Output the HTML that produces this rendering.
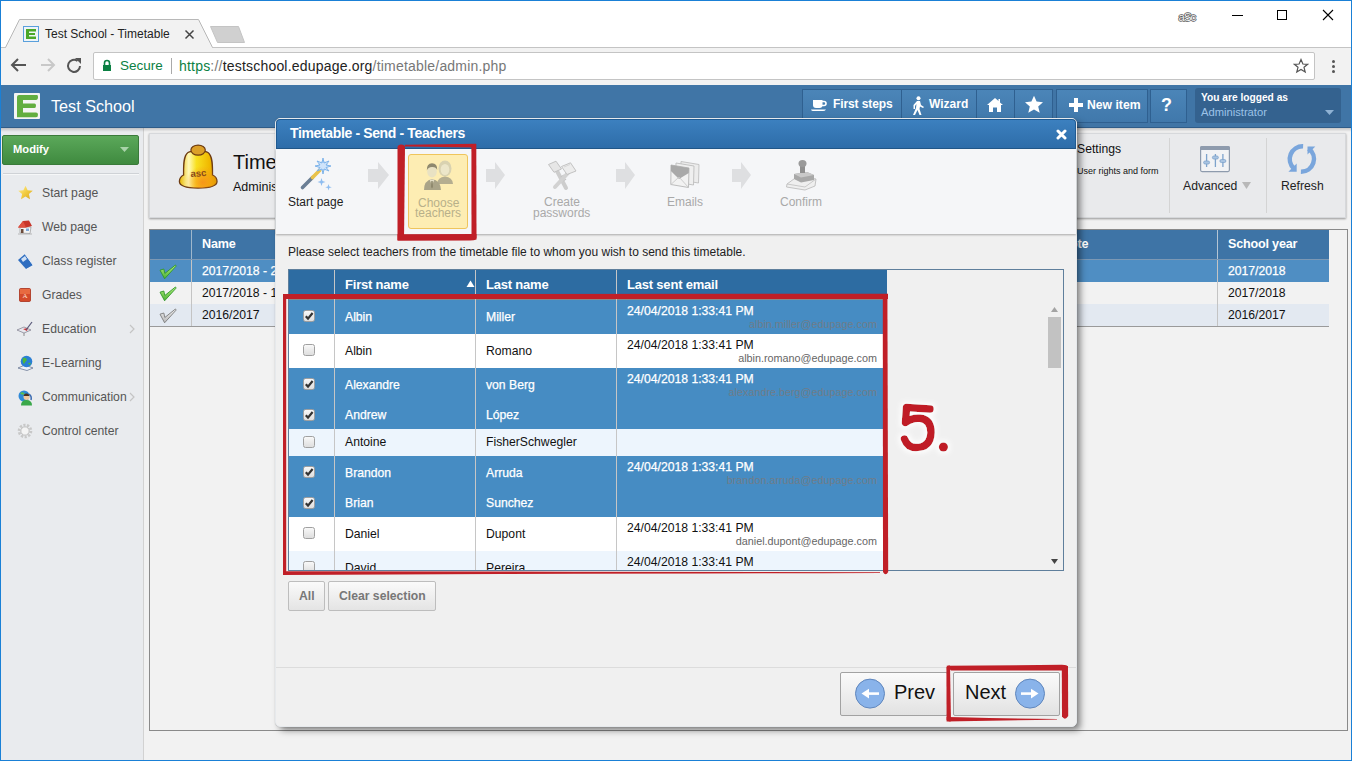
<!DOCTYPE html>
<html><head><meta charset="utf-8">
<style>
*{margin:0;padding:0;box-sizing:border-box}
html,body{width:1352px;height:761px;overflow:hidden;background:#fff;font-family:"Liberation Sans",sans-serif;font-size:13px;color:#222}
.a{position:absolute}
.t{position:absolute;white-space:nowrap;line-height:1}
</style></head><body>
<!-- window frame -->
<div class="a" style="left:0;top:0;width:1352px;height:761px;border:1px solid #1a80d6;z-index:100;pointer-events:none"></div>
<!-- title bar -->
<div class="a" style="left:1px;top:1px;width:1350px;height:46px;background:#fff"></div>
<svg class="a" style="left:0;top:0" width="260" height="48">
  <path d="M5.5,47.5 L19.5,19.5 L198.5,19.5 L212.5,47.5" fill="#f2f2f2" stroke="#b8b8b8" stroke-width="1"/>
  <path d="M210.5,26.5 L238.5,26.5 L244.5,42.5 L217.5,42.5 Z" fill="#d0d0d0" stroke="#c4c4c4" stroke-width="1" stroke-linejoin="round"/>
</svg>
<div class="a" style="left:1px;top:47px;width:1350px;height:1px;background:#c4c4c4"></div>
<div class="a" style="left:6px;top:47px;width:206px;height:1px;background:#f2f2f2"></div>
<!-- favicon -->
<svg class="a" style="left:23px;top:26px" width="16" height="16"><rect x="0.5" y="0.5" width="15" height="15" fill="#eef4f8" stroke="#5aa0dc"/>
<path d="M3,3 H13 V5.5 H6 V7 H12 V9 H6 V10.5 H13 V13 H3 Z" fill="#4aa82a"/></svg>
<div class="t" style="left:45px;top:28px;font-size:12px;color:#222">Test School - Timetable</div>
<svg class="a" style="left:184px;top:29px" width="12" height="12"><path d="M1.5,1.5 L9.5,9.5 M9.5,1.5 L1.5,9.5" stroke="#444" stroke-width="1.5"/></svg>
<!-- window controls -->
<svg class="a" style="left:1176px;top:8px" width="24" height="16"><text x="2.5" y="13" font-family="Liberation Sans" font-size="11.2" letter-spacing="-0.8" fill="#f6f6f6" stroke="#5a5a5a" stroke-width="1.5" paint-order="stroke" stroke-linejoin="round">aSc</text></svg>
<div class="a" style="left:1232px;top:15px;width:11px;height:1px;background:#000"></div>
<div class="a" style="left:1277px;top:10px;width:10px;height:10px;border:1px solid #000"></div>
<svg class="a" style="left:1322px;top:9px" width="13" height="13"><path d="M1,1 L11,11 M11,1 L1,11" stroke="#000" stroke-width="1.1"/></svg>
<!-- toolbar -->
<div class="a" style="left:1px;top:48px;width:1350px;height:37px;background:#f2f2f2"></div>
<svg class="a" style="left:10px;top:57px" width="80" height="18">
 <path d="M16,8 L2,8 M8,2 L2,8 L8,14" fill="none" stroke="#555" stroke-width="2"/>
 <path d="M31,8 L44,8 M38,2 L44,8 L38,14" fill="none" stroke="#c8c8c8" stroke-width="2"/>
</svg>
<svg class="a" style="left:66px;top:57px" width="18" height="18"><path d="M14,9 A6,6 0 1 1 11.5,4" fill="none" stroke="#555" stroke-width="2"/><path d="M9,1 L15,1 L15,7 Z" fill="#555"/></svg>
<div class="a" style="left:93px;top:52px;width:1222px;height:28px;background:#fff;border:1px solid #c4c4c4;border-radius:2px"></div>
<svg class="a" style="left:102px;top:59px" width="10" height="13"><path d="M2.5,6 V4 A2.5,2.5 0 0 1 7.5,4 V6" fill="none" stroke="#0b8043" stroke-width="1.6"/><rect x="1" y="6" width="8" height="6" fill="#0b8043"/></svg>
<div class="t" style="left:120px;top:59px;font-size:13.5px;color:#0b8043">Secure</div>
<div class="a" style="left:171px;top:58px;width:1px;height:16px;background:#aaa"></div>
<div class="t" style="left:179px;top:59px;font-size:14px;letter-spacing:0.2px;color:#222"><span style="color:#0b8043">https</span><span style="color:#777">://</span>testschool.edupage.org<span style="color:#777">/timetable/admin.php</span></div>
<svg class="a" style="left:1293px;top:58px" width="16" height="16"><path d="M8,1.5 L9.9,6 L14.6,6.3 L11,9.3 L12.2,14 L8,11.4 L3.8,14 L5,9.3 L1.4,6.3 L6.1,6 Z" fill="none" stroke="#555" stroke-width="1.2"/></svg>
<div class="a" style="left:1332px;top:60px;width:3px;height:3px;background:#555;border-radius:50%"></div>
<div class="a" style="left:1332px;top:65px;width:3px;height:3px;background:#555;border-radius:50%"></div>
<div class="a" style="left:1332px;top:70px;width:3px;height:3px;background:#555;border-radius:50%"></div>

<!-- header -->
<div class="a" style="left:1px;top:85px;width:1350px;height:43px;background:#4075a6"></div>
<svg class="a" style="left:14px;top:93px" width="26" height="26"><rect x="0" y="0" width="26" height="26" rx="1" fill="#f4f4f4"/>
<path d="M3,4 Q3,2 5,2 H23 Q24,2 24,4 Q24,7 22,7 H9 V10.4 H20.5 Q22,10.4 22,12.7 Q22,15 20.5,15 H9 V19.4 H22 Q24,19.4 24,21.7 Q24,24.3 22,24.3 H3 Z" fill="#62ae40"/></svg>
<div class="t" style="left:51px;top:98px;font-size:16.2px;color:#fff">Test School</div>


<!-- header buttons -->
<div class="a" style="left:802px;top:89px;width:251px;height:34px;border:1px solid #2f6090;background:linear-gradient(#4b85b8,#4078ab)"></div>
<div class="a" style="left:901px;top:90px;width:1px;height:32px;background:#2f6090"></div>
<div class="a" style="left:976px;top:90px;width:1px;height:32px;background:#2f6090"></div>
<div class="a" style="left:1014px;top:90px;width:1px;height:32px;background:#2f6090"></div>
<div class="a" style="left:1056px;top:89px;width:92px;height:34px;border:1px solid #2f6090;background:linear-gradient(#4b85b8,#4078ab)"></div>
<div class="a" style="left:1150px;top:89px;width:37px;height:34px;border:1px solid #2f6090;background:linear-gradient(#4b85b8,#4078ab)"></div>
<div class="a" style="left:1195px;top:88px;width:146px;height:35px;border-radius:3px;background:#34628f"></div>
<svg class="a" style="left:810px;top:99px" width="18" height="13"><path d="M3,1 H12.5 V6 Q12.5,9 9.5,9 H6 Q3,9 3,6 Z" fill="#fff"/><path d="M12,2.5 H14 Q16,2.5 16,4.5 Q16,6.5 14,6.5 H12" fill="none" stroke="#fff" stroke-width="1.6"/><path d="M1,10.5 H16 Q15,12 13,12 H3 Q1.5,12 1,10.5 Z" fill="#fff"/></svg>
<div class="t" style="left:833px;top:98px;font-size:12px;font-weight:bold;color:#fff;letter-spacing:-0.1px">First steps</div>
<svg class="a" style="left:911px;top:96px" width="14" height="20"><circle cx="7.5" cy="2.3" r="2" fill="#fff"/><path d="M6,5 L9,5 L10,9 L13,11 L12,12 L9,10.5 L8.5,13 L10.5,19 L8.5,19 L6.5,14 L4,19 L2,19 L5,12 L5.5,8 L4,10 L4,13 L2.5,13 L2.5,9 Z" fill="#fff"/></svg>
<div class="t" style="left:929px;top:98px;font-size:12px;font-weight:bold;color:#fff">Wizard</div>
<svg class="a" style="left:986px;top:97px" width="18" height="16"><path d="M9,1 L1,8 L3,8 L3,15 L7,15 L7,10.5 L11,10.5 L11,15 L15,15 L15,8 L17,8 L14,5.4 L14,2 L12.5,2 L12.5,4.1 Z" fill="#fff"/></svg>
<svg class="a" style="left:1024px;top:95px" width="20" height="19"><path d="M10,0.8 L12.6,6.6 L19,7.2 L14.2,11.4 L15.7,17.8 L10,14.5 L4.3,17.8 L5.8,11.4 L1,7.2 L7.4,6.6 Z" fill="#fff"/></svg>
<svg class="a" style="left:1068px;top:97px" width="16" height="16"><path d="M6,1 H10 V6 H15 V10 H10 V15 H6 V10 H1 V6 H6 Z" fill="#fff"/></svg>
<div class="t" style="left:1087px;top:99px;font-size:12.2px;font-weight:bold;color:#fff">New item</div>
<div class="t" style="left:1161px;top:96px;font-size:18px;font-weight:bold;color:#fff">?</div>
<div class="t" style="left:1201px;top:93px;font-size:10.2px;font-weight:bold;color:#fff">You are logged as</div>
<div class="t" style="left:1201px;top:107px;font-size:11.2px;color:#9cc2e8">Administrator</div>
<svg class="a" style="left:1325px;top:110px" width="10" height="6"><path d="M0,0 L9,0 L4.5,5 Z" fill="#8fb2d4"/></svg>
<!-- sidebar -->

<div class="a" style="left:1px;top:127px;width:142px;height:633px;background:#e9ebee"></div>
<div class="a" style="left:143px;top:127px;width:1px;height:633px;background:#d2d2d2"></div>
<!-- content -->
<div class="a" style="left:144px;top:127px;width:1207px;height:633px;background:#f2f2f2"></div>
<div class="a" style="left:1px;top:127px;width:1350px;height:1px;background:#2f5c88"></div>
<div class="a" style="left:1px;top:128px;width:1350px;height:4px;background:linear-gradient(rgba(0,0,0,0.18),rgba(0,0,0,0))"></div>


<!-- sidebar items -->
<div class="a" style="left:2px;top:135px;width:137px;height:30px;border-radius:2px;background:linear-gradient(#5ba85a,#3f8a3f);border:1px solid #3a7a3a"></div>
<div class="t" style="left:13px;top:144px;font-size:11.2px;font-weight:bold;color:#fff">Modify</div>
<svg class="a" style="left:120px;top:147px" width="10" height="6"><path d="M0,0 L9,0 L4.5,5 Z" fill="#a9d3a9"/></svg>
<div class="a" style="left:3px;top:173px;width:136px;height:1px;background:#cfd2d6"></div>
<div class="a" style="left:3px;top:174px;width:136px;height:1px;background:#f6f7f8"></div>
<div class="t" style="left:42px;top:187px;font-size:12.2px;color:#555">Start page</div>
<div class="t" style="left:42px;top:221px;font-size:12.2px;color:#555">Web page</div>
<div class="t" style="left:42px;top:255px;font-size:12.2px;color:#555">Class register</div>
<div class="t" style="left:42px;top:289px;font-size:12.2px;color:#555">Grades</div>
<div class="t" style="left:42px;top:323px;font-size:12.2px;color:#555">Education</div>
<svg class="a" style="left:129px;top:324px" width="6" height="10"><path d="M1,1 L5,5 L1,9" fill="none" stroke="#c4c4c4" stroke-width="1.2"/></svg>
<div class="t" style="left:42px;top:357px;font-size:12.2px;color:#555">E-Learning</div>
<div class="t" style="left:42px;top:391px;font-size:12.2px;color:#555">Communication</div>
<svg class="a" style="left:129px;top:392px" width="6" height="10"><path d="M1,1 L5,5 L1,9" fill="none" stroke="#c4c4c4" stroke-width="1.2"/></svg>
<div class="t" style="left:42px;top:425px;font-size:12.2px;color:#555">Control center</div>

<svg class="a" style="left:17px;top:185px" width="17" height="15"><defs><linearGradient id="stg" x1="0" y1="0" x2="1" y2="1"><stop offset="0" stop-color="#fff0a0"/><stop offset="0.5" stop-color="#f2cc40"/><stop offset="1" stop-color="#d9a520"/></linearGradient></defs><path d="M8.5,0.8 L10.6,5.3 L15.8,5.8 L11.9,9.1 L13,14.2 L8.5,11.6 L4,14.2 L5.1,9.1 L1.2,5.8 L6.4,5.3 Z" fill="url(#stg)"/></svg>
<svg class="a" style="left:17px;top:219px" width="16" height="16">
 <path d="M3,8 L3,14 L13,14.5 L14,8 Z" fill="#f4f4f4" stroke="#8a8a8a" stroke-width="0.6"/>
 <path d="M1,8.5 L6,2 L12,1.5 L15,7 L9,8.5 Z" fill="#c8352a"/>
 <path d="M1,8.5 L6,2 L9,8.5 Z" fill="#e05040"/>
 <rect x="4" y="10" width="2.5" height="4" fill="#6b4a3a"/>
 <rect x="9" y="9.5" width="3" height="2.5" fill="#7fa8d8"/>
 <path d="M1,15 L15,15" stroke="#aaa" stroke-width="0.8"/>
</svg>
<svg class="a" style="left:17px;top:253px" width="17" height="17">
 <path d="M1,7 L8,1 L16,12 L9,16 Z" fill="#2e6dc0"/>
 <path d="M8,1 L16,12 L16.5,13 L9.5,16.5" fill="none" stroke="#e8eef5" stroke-width="1"/>
 <path d="M4,6 L8,3 L10,6 L6,9 Z" fill="#cfe0f5"/>
</svg>
<svg class="a" style="left:19px;top:288px" width="12" height="14">
 <rect x="0.5" y="0.5" width="11" height="13" rx="1.2" fill="#d44a2a" stroke="#a8301a" stroke-width="0.8"/>
 <rect x="1" y="1" width="10" height="5" fill="#e86a40"/>
 <text x="6" y="10" font-family="Liberation Serif" font-size="7" fill="#ffe0d0" text-anchor="middle">A</text>
</svg>
<svg class="a" style="left:16px;top:321px" width="18" height="16">
 <path d="M1,9 L8,6 L15,9 L8,12 Z" fill="#e8e8ee" stroke="#7a7a8a" stroke-width="0.7"/>
 <path d="M8,12 L8,15" stroke="#777" stroke-width="0.8"/>
 <path d="M7,8 L12,7 L11,10 Z" fill="#d42a2a"/>
 <path d="M10,9 L16,1" stroke="#5a5a7a" stroke-width="1.2"/>
</svg>
<svg class="a" style="left:17px;top:355px" width="17" height="16">
 <path d="M1,13 L8,10 L16,13 L10,15.5 Z" fill="#eef2f8" stroke="#5a6a8a" stroke-width="0.7"/>
 <circle cx="9.5" cy="6.5" r="5.8" fill="#2a7fd4"/>
 <path d="M6,3 Q9,2 10,5 Q8,7 7,9 Q5,7 6,3 Z M11,8 Q13,7 14,9 Q12,11 11,8 Z" fill="#4cb83c"/>
</svg>
<svg class="a" style="left:17px;top:390px" width="16" height="16">
 <circle cx="7" cy="6" r="5.5" fill="#2f8ad8"/>
 <path d="M3,3 Q6,1 8,4 Q5,6 3,3 Z" fill="#5cc04c"/>
 <path d="M4,15.5 Q4,10 9.5,10 Q15,10 15,15.5 Z" fill="#3aa84a"/>
 <circle cx="9.5" cy="7" r="3" fill="#f0c8a0"/>
 <path d="M6.5,6 Q7,3 9.5,3.5 Q12,3 12.5,6 Z" fill="#4a3020"/>
 <path d="M12,4 Q15,6 14,10" fill="none" stroke="#3a6ab0" stroke-width="1.5"/>
</svg>
<svg class="a" style="left:17px;top:423px" width="16" height="16">
 <circle cx="8" cy="8" r="6" fill="none" stroke="#c8c8c8" stroke-width="2.6" stroke-dasharray="2.2,1.5"/>
 <circle cx="8" cy="8" r="4.2" fill="#f4f4f4" stroke="#bdbdbd" stroke-width="1"/>
</svg>
<!-- page toolbar box -->
<div class="a" style="left:149px;top:133px;width:1197px;height:85px;background:#e9eaec;border:1px solid #d6d8db;box-shadow:0 1px 2px rgba(0,0,0,0.38)"></div>
<svg class="a" style="left:176px;top:142px" width="44" height="48">
 <defs>
  <linearGradient id="bellg" x1="0" y1="0" x2="1" y2="0"><stop offset="0" stop-color="#e8b800"/><stop offset="0.25" stop-color="#fff9b8"/><stop offset="0.45" stop-color="#f8e020"/><stop offset="0.8" stop-color="#f0b800"/><stop offset="1" stop-color="#d89a00"/></linearGradient>
  <radialGradient id="bello" cx="0.62" cy="0.85" r="0.45"><stop offset="0" stop-color="#f7901a" stop-opacity="0.9"/><stop offset="1" stop-color="#f7901a" stop-opacity="0"/></radialGradient>
 </defs>
 <path d="M7.6,33 C7.6,25 7,14 12,10.5 C15,8.5 29,8.5 32,10.5 C37,14 36.5,25 36.5,33 C40,34.5 41,37 41,39.5 C41,44 33,46 22,46 C11,46 3.4,44 3.4,39.5 C3.4,37 4.5,34.5 7.6,33 Z" fill="url(#bellg)" stroke="#6e3c12" stroke-width="1.3"/>
 <path d="M7.6,33 C7.6,25 7,14 12,10.5 C15,8.5 29,8.5 32,10.5 C37,14 36.5,25 36.5,33 C40,34.5 41,37 41,39.5 C41,44 33,46 22,46 C11,46 3.4,44 3.4,39.5 C3.4,37 4.5,34.5 7.6,33 Z" fill="url(#bello)"/>
 <ellipse cx="22.1" cy="8.1" rx="7.2" ry="5" fill="#dca028" stroke="#6e3c12" stroke-width="1.2"/>
 <text x="22.5" y="34.5" font-family="Liberation Sans" font-size="9.5" font-weight="bold" fill="#8a4a1a" text-anchor="middle" transform="rotate(-4 22 32)">asc</text>
</svg>
<div class="t" style="left:233px;top:152px;font-size:20px;color:#111">Timetables</div>
<div class="t" style="left:233px;top:181px;font-size:12.5px;color:#111">Administration</div>
<div class="t" style="left:1077px;top:143px;font-size:12.2px;color:#111">Settings</div>
<div class="t" style="left:1077px;top:167px;font-size:9px;color:#111">User rights and form</div>
<div class="a" style="left:1169px;top:138px;width:1px;height:75px;background:#d4d4d4"></div>
<div class="a" style="left:1266px;top:138px;width:1px;height:75px;background:#d4d4d4"></div>
<svg class="a" style="left:1200px;top:146px" width="31" height="27">
 <rect x="0.6" y="0.6" width="28.8" height="25" rx="1.5" fill="#f2f3f5" stroke="#8e9bad" stroke-width="1.2"/>
 <path d="M0,2 Q0,0 2,0 H28 Q30,0 30,2 V4 H0 Z" fill="#8e9bad"/>
 <path d="M6.6,8 V21 M15.4,8 V21 M22.9,8 V21" stroke="#7ea3cc" stroke-width="1.3"/>
 <rect x="3.6" y="15" width="6" height="3" rx="1.5" fill="#a9c4e2" stroke="#7ea3cc" stroke-width="0.8"/>
 <rect x="12.4" y="10" width="6" height="3" rx="1.5" fill="#a9c4e2" stroke="#7ea3cc" stroke-width="0.8"/>
 <rect x="19.9" y="13.5" width="6" height="3" rx="1.5" fill="#a9c4e2" stroke="#7ea3cc" stroke-width="0.8"/>
</svg>
<div class="t" style="left:1183px;top:180px;font-size:12.2px;color:#222">Advanced</div>
<svg class="a" style="left:1242px;top:182px" width="10" height="8"><path d="M0,0 L9,0 L4.5,7 Z" fill="#b8b8b8"/></svg>
<svg class="a" style="left:1285px;top:143px" width="34" height="33">
 <path d="M18.1,3.3 A12.8,12.8 0 0 0 8.9,25.5" fill="none" stroke="#7aa6dc" stroke-width="4.5"/>
 <path d="M15.9,28.8 A12.8,12.8 0 0 0 23.6,5.6" fill="none" stroke="#7aa6dc" stroke-width="4.5"/>
 <path d="M3.4,28.7 L11.7,28.7 L11.7,20.5 Z" fill="#7aa6dc"/>
 <path d="M22.5,3.4 L30.3,3.4 L22.5,11.5 Z" fill="#7aa6dc"/>
</svg>
<div class="t" style="left:1281px;top:180px;font-size:12.2px;color:#222">Refresh</div>

<!-- page table -->
<div class="a" style="left:149px;top:229px;width:1199px;height:502px;border:1px solid #8a8a8a;border-top-color:#8a8a8a;background:#f2f2f2"></div>
<div class="a" style="left:150px;top:230px;width:1179px;height:29px;background:#3e74a6"></div>
<div class="a" style="left:191px;top:230px;width:1px;height:96px;background:#9fb7cc"></div>
<div class="a" style="left:1217px;top:230px;width:1px;height:96px;background:#b5c5d4"></div>
<div class="t" style="left:202px;top:238px;font-size:12.6px;font-weight:bold;color:#fff;letter-spacing:-0.2px">Name</div>
<div class="t" style="left:1061px;top:238px;font-size:12.6px;font-weight:bold;color:#fff;letter-spacing:-0.2px">Note</div>
<div class="t" style="left:1228px;top:238px;font-size:12.6px;font-weight:bold;color:#fff;letter-spacing:-0.2px">School year</div>
<div class="a" style="left:150px;top:259px;width:1179px;height:1px;background:#7c98b4"></div>
<div class="a" style="left:150px;top:260px;width:1179px;height:22px;background:#4f8ec3"></div>
<div class="a" style="left:150px;top:282px;width:1179px;height:22px;background:#f2f2f2"></div>
<div class="a" style="left:150px;top:304px;width:1179px;height:22px;background:#e3e9f1"></div>
<div class="a" style="left:150px;top:326px;width:1179px;height:1px;background:#9a9a9a"></div>
<div class="a" style="left:191px;top:260px;width:1px;height:66px;background:#c4c4c4"></div>
<div class="a" style="left:1217px;top:260px;width:1px;height:66px;background:#c4c4c4"></div>
<div class="t" style="left:202px;top:265px;font-size:12.2px;color:#fff;-webkit-text-stroke:0.25px #fff">2017/2018 - 2</div>
<div class="t" style="left:202px;top:287px;font-size:12.2px;color:#111">2017/2018 - 1</div>
<div class="t" style="left:202px;top:309px;font-size:12.2px;color:#111">2016/2017</div>
<div class="t" style="left:1228px;top:265px;font-size:12.2px;color:#fff;-webkit-text-stroke:0.25px #fff">2017/2018</div>
<div class="t" style="left:1228px;top:287px;font-size:12.2px;color:#111">2017/2018</div>
<div class="t" style="left:1228px;top:309px;font-size:12.2px;color:#111">2016/2017</div>
<svg class="a" style="left:159px;top:262px" width="19" height="64">
 <defs><linearGradient id="ckg" x1="0" y1="0" x2="0" y2="1"><stop offset="0" stop-color="#b8f080"/><stop offset="1" stop-color="#48b030"/></linearGradient>
 <linearGradient id="ckgr" x1="0" y1="0" x2="0" y2="1"><stop offset="0" stop-color="#f0f0f0"/><stop offset="1" stop-color="#b8b8b8"/></linearGradient></defs>
 <path d="M1,8.2 L4.8,7 L5.8,11.5 L16.2,3.2 Q17.3,3 17,4.2 L5.6,16.8 Z" fill="url(#ckg)" stroke="#2f962a" stroke-width="0.9" stroke-linejoin="round"/>
 <path d="M1,30.2 L4.8,29 L5.8,33.5 L16.2,25.2 Q17.3,25 17,26.2 L5.6,38.8 Z" fill="url(#ckg)" stroke="#2f962a" stroke-width="0.9" stroke-linejoin="round"/>
 <path d="M1,52.2 L4.8,51 L5.8,55.5 L16.2,47.2 Q17.3,47 17,48.2 L5.6,60.8 Z" fill="url(#ckgr)" stroke="#7a7a7a" stroke-width="0.9" stroke-linejoin="round"/>
</svg>

<!-- MODAL -->
<div class="a" style="left:275px;top:118px;width:802px;height:609px;border-radius:5px;background:#f0f0f0;border:1px solid #e6e9ec;box-shadow:4px 4px 7px -1px rgba(0,0,0,0.5),0 0 1px rgba(0,0,0,0.25)"></div>
<div class="a" style="left:276px;top:119px;width:800px;height:30px;border-radius:4px 4px 0 0;background:linear-gradient(#3c80bf,#2d6ca8);border:1px solid #1f5a92;border-bottom:none"></div>
<div class="a" style="left:276px;top:148px;width:800px;height:1px;background:#22588a"></div>
<div class="t" style="left:290px;top:126px;font-size:14px;font-weight:bold;color:#fff;letter-spacing:-0.36px">Timetable - Send - Teachers</div>
<svg class="a" style="left:1056px;top:129px" width="11" height="11"><path d="M2,2 L9,9 M9,2 L2,9" stroke="#fff" stroke-width="3" stroke-linecap="round"/></svg>
<!-- steps panel -->
<div class="a" style="left:276px;top:149px;width:800px;height:85px;background:#f5f6f8;box-shadow:0 1px 2px rgba(0,0,0,0.3)"></div>
<!-- wand -->
<svg class="a" style="left:298px;top:157px" width="38" height="36">
 <path d="M4.5,30.5 L14.5,20.5" stroke="#6b7f95" stroke-width="3.6" stroke-linecap="round"/>
 <path d="M14.5,20.5 L24,11" stroke="#e9c24a" stroke-width="3.6" stroke-linecap="round"/>
 <circle cx="25" cy="9" r="5" fill="#cfe4fb"/>
 <path d="M25,1 L26,6 L31,4 L28,8 L33,9 L28,10.5 L31,14 L26,12 L25,17 L24,12 L19,14 L22,10.5 L17,9 L22,8 L19,4 L24,6 Z" fill="none" stroke="#7db3ea" stroke-width="1"/>
 <path d="M23.5,21 L24.5,24 L27.5,25 L24.5,26 L23.5,29 L22.5,26 L19.5,25 L22.5,24 Z" fill="#8fbdf0"/>
 <path d="M30.5,27 L31.3,29.5 L33.8,30.3 L31.3,31.1 L30.5,33.6 L29.7,31.1 L27.2,30.3 L29.7,29.5 Z" fill="#8fbdf0"/>
</svg>
<div class="t" style="left:288px;top:196px;font-size:12px;color:#222">Start page</div>
<!-- arrows -->
<svg class="a" style="left:367px;top:161px" width="24" height="30"><path d="M1,8 H11 V1 L22,14 L11,28 V21 H1 Z" fill="#dedfe1"/></svg>
<svg class="a" style="left:485px;top:161px" width="24" height="30"><path d="M1,8 H10 V1 L20,14 L10,28 V21 H1 Z" fill="#dedfe1"/></svg>
<svg class="a" style="left:615px;top:161px" width="24" height="30"><path d="M1,8 H10 V1 L20,14 L10,28 V21 H1 Z" fill="#dedfe1"/></svg>
<svg class="a" style="left:731px;top:161px" width="24" height="30"><path d="M1,8 H10 V1 L20,14 L10,28 V21 H1 Z" fill="#dedfe1"/></svg>
<!-- choose teachers -->
<div class="a" style="left:408px;top:154px;width:60px;height:75px;border-radius:3px;background:#fdedb3;border:1px solid #efc55c"></div>
<svg class="a" style="left:422px;top:160px" width="33" height="32">
 <ellipse cx="23" cy="8.5" rx="6.5" ry="8" fill="#d9d2b0"/>
 <ellipse cx="23" cy="9.5" rx="4.3" ry="5.5" fill="#ece6c9"/>
 <path d="M15,24 Q15.5,17 23,16.5 Q30.5,17 31,24 Z" fill="#b5ae90"/>
 <path d="M2,30 Q2,20.5 10,19 Q18.5,20.5 19,30 Z" fill="#aaa488"/>
 <path d="M7.5,19.5 L10,25 L12.5,19.5 Z" fill="#e6e0c8"/>
 <path d="M9.3,21 L10.7,21 L11,27 L10,28.5 L9,27 Z" fill="#8d876c"/>
 <ellipse cx="10" cy="11.5" rx="4.8" ry="6" fill="#e9e2c3"/>
 <path d="M4.8,10.5 Q4.5,3.5 10,3.3 Q15.5,3.5 15.2,10 Q14,6.8 10,7 Q6,7 4.8,10.5 Z" fill="#8f896e"/>
</svg>
<div class="t" style="left:418px;top:197px;font-size:12px;color:#b8b08a">Choose</div>
<div class="t" style="left:415px;top:207px;font-size:12px;color:#b8b08a">teachers</div>
<!-- create passwords -->
<svg class="a" style="left:547px;top:160px" width="31" height="31">
 <path d="M10,11 L19,28" stroke="#cdcdcd" stroke-width="4" stroke-linecap="round"/>
 <path d="M14,17 L17,15 M16,21 L19,19" stroke="#c4c4c4" stroke-width="1.5"/>
 <path d="M1.5,4.5 L9,1.2 L14.5,9 L7,12.3 Z" fill="#e6e6e6" stroke="#c2c2c2" stroke-width="1"/>
 <path d="M21,13 L8,27" stroke="#d2d2d2" stroke-width="4" stroke-linecap="round"/>
 <path d="M14.5,6.5 L23.5,2.8 L29,11 L20,14.5 Z" fill="#ececec" stroke="#c2c2c2" stroke-width="1"/>
 <path d="M17,7 L23,4.5" stroke="#d0d0d0" stroke-width="0.8"/>
</svg>
<div class="t" style="left:544px;top:196px;font-size:12px;color:#a9a9a9">Create</div>
<div class="t" style="left:533px;top:207px;font-size:12px;color:#a9a9a9">passwords</div>
<!-- emails -->
<svg class="a" style="left:670px;top:160px" width="31" height="29">
 <path d="M11,1.5 L29,4.5 L28.5,23 L10.5,20 Z" fill="#ececec" stroke="#c0c0c0" stroke-width="0.9"/>
 <path d="M6,3 L24,6 L23.5,25 L5.5,22 Z" fill="#efefef" stroke="#bdbdbd" stroke-width="0.9"/>
 <path d="M1,5 L19,8 L18.5,27.5 L0.8,24.5 Z" fill="#f2f2f2" stroke="#b5b5b5" stroke-width="0.9"/>
 <path d="M1,5 L19,8 L18.8,13 L9,19 L0.9,11 Z" fill="#a9a9a9"/>
 <path d="M0.9,24.5 L9,17 L18.5,27.5" fill="none" stroke="#c8c8c8" stroke-width="0.9"/>
</svg>
<div class="t" style="left:667px;top:196px;font-size:12px;color:#a9a9a9">Emails</div>
<!-- confirm -->
<svg class="a" style="left:786px;top:159px" width="31" height="32">
 <path d="M1,25 L12,17 L30,20 L29,27 L19,31 L0.5,28 Z" fill="#efefef" stroke="#bdbdbd" stroke-width="0.9"/>
 <path d="M1,25 L19,28 L30,20" fill="none" stroke="#c4c4c4" stroke-width="0.9"/>
 <path d="M8,15 L21,13 L28,16 L28,21 L15,23.5 L8,20 Z" fill="#a8a8a8"/>
 <path d="M8,15 L21,13 L28,16 L15,18.5 Z" fill="#c9c9c9"/>
 <rect x="14" y="6" width="5" height="8" fill="#8f8f8f"/>
 <ellipse cx="16.5" cy="4.5" rx="4" ry="3.5" fill="#9a9a9a"/>
</svg>
<div class="t" style="left:780px;top:196px;font-size:12px;color:#a9a9a9">Confirm</div>
<!-- instruction -->
<div class="t" style="left:288px;top:246px;font-size:12px;color:#222">Please select teachers from the timetable file to whom you wish to send this timetable.</div>

<!-- GRID -->
<div class="a" style="left:288px;top:269px;width:776px;height:302px;border:1px solid #5f7f9c;background:#f0f0f0;overflow:hidden">
 <div class="a" style="left:0;top:0;width:598px;height:29px;background:#2d6ca2"></div>
 <div class="a" style="left:0;top:29px;width:598px;height:1px;background:#8a8a8a"></div>
 <div class="a" style="left:0;top:30px;width:598px;height:34px;background:#468cc3"></div>
 <div class="a" style="left:14px;top:40px;width:12px;height:12px;border-radius:2.5px;border:1px solid #a0a0a0;background:linear-gradient(#f8f8f8,#dedede)"></div>
 <svg class="a" style="left:15px;top:41px" width="10" height="10"><path d="M1.8,5.2 L4,7.6 L8.6,2" fill="none" stroke="#333" stroke-width="2.2"/></svg>
 <div class="t" style="left:56px;top:41px;font-size:12.2px;color:#fff;-webkit-text-stroke:0.25px #fff">Albin</div>
 <div class="t" style="left:197px;top:41px;font-size:12.2px;color:#fff;-webkit-text-stroke:0.25px #fff">Miller</div>
 <div class="t" style="left:338px;top:35px;font-size:12.2px;color:#fff;-webkit-text-stroke:0.25px #fff">24/04/2018 1:33:41 PM</div>
 <div class="t" style="left:300px;top:49px;width:288px;text-align:right;font-size:10.8px;color:#6f7c89">albin.miller@edupage.com</div>
 <div class="a" style="left:0;top:64px;width:598px;height:34px;background:#ffffff"></div>
 <div class="a" style="left:14px;top:74px;width:12px;height:12px;border-radius:2.5px;border:1px solid #a0a0a0;background:linear-gradient(#f8f8f8,#dedede)"></div>
 <div class="t" style="left:56px;top:75px;font-size:12.2px;color:#111">Albin</div>
 <div class="t" style="left:197px;top:75px;font-size:12.2px;color:#111">Romano</div>
 <div class="t" style="left:338px;top:69px;font-size:12.2px;color:#111">24/04/2018 1:33:41 PM</div>
 <div class="t" style="left:300px;top:83px;width:288px;text-align:right;font-size:10.8px;color:#666">albin.romano@edupage.com</div>
 <div class="a" style="left:0;top:98px;width:598px;height:34px;background:#468cc3"></div>
 <div class="a" style="left:14px;top:108px;width:12px;height:12px;border-radius:2.5px;border:1px solid #a0a0a0;background:linear-gradient(#f8f8f8,#dedede)"></div>
 <svg class="a" style="left:15px;top:109px" width="10" height="10"><path d="M1.8,5.2 L4,7.6 L8.6,2" fill="none" stroke="#333" stroke-width="2.2"/></svg>
 <div class="t" style="left:56px;top:109px;font-size:12.2px;color:#fff;-webkit-text-stroke:0.25px #fff">Alexandre</div>
 <div class="t" style="left:197px;top:109px;font-size:12.2px;color:#fff;-webkit-text-stroke:0.25px #fff">von Berg</div>
 <div class="t" style="left:338px;top:103px;font-size:12.2px;color:#fff;-webkit-text-stroke:0.25px #fff">24/04/2018 1:33:41 PM</div>
 <div class="t" style="left:300px;top:117px;width:288px;text-align:right;font-size:10.8px;color:#6f7c89">alexandre.berg@edupage.com</div>
 <div class="a" style="left:0;top:132px;width:598px;height:27px;background:#468cc3"></div>
 <div class="a" style="left:14px;top:139px;width:12px;height:12px;border-radius:2.5px;border:1px solid #a0a0a0;background:linear-gradient(#f8f8f8,#dedede)"></div>
 <svg class="a" style="left:15px;top:140px" width="10" height="10"><path d="M1.8,5.2 L4,7.6 L8.6,2" fill="none" stroke="#333" stroke-width="2.2"/></svg>
 <div class="t" style="left:56px;top:139px;font-size:12.2px;color:#fff;-webkit-text-stroke:0.25px #fff">Andrew</div>
 <div class="t" style="left:197px;top:139px;font-size:12.2px;color:#fff;-webkit-text-stroke:0.25px #fff">López</div>
 <div class="a" style="left:0;top:159px;width:598px;height:27px;background:#edf5fd"></div>
 <div class="a" style="left:14px;top:166px;width:12px;height:12px;border-radius:2.5px;border:1px solid #a0a0a0;background:linear-gradient(#f8f8f8,#dedede)"></div>
 <div class="t" style="left:56px;top:166px;font-size:12.2px;color:#111">Antoine</div>
 <div class="t" style="left:197px;top:166px;font-size:12.2px;color:#111">FisherSchwegler</div>
 <div class="a" style="left:0;top:186px;width:598px;height:34px;background:#468cc3"></div>
 <div class="a" style="left:14px;top:196px;width:12px;height:12px;border-radius:2.5px;border:1px solid #a0a0a0;background:linear-gradient(#f8f8f8,#dedede)"></div>
 <svg class="a" style="left:15px;top:197px" width="10" height="10"><path d="M1.8,5.2 L4,7.6 L8.6,2" fill="none" stroke="#333" stroke-width="2.2"/></svg>
 <div class="t" style="left:56px;top:197px;font-size:12.2px;color:#fff;-webkit-text-stroke:0.25px #fff">Brandon</div>
 <div class="t" style="left:197px;top:197px;font-size:12.2px;color:#fff;-webkit-text-stroke:0.25px #fff">Arruda</div>
 <div class="t" style="left:338px;top:191px;font-size:12.2px;color:#fff;-webkit-text-stroke:0.25px #fff">24/04/2018 1:33:41 PM</div>
 <div class="t" style="left:300px;top:205px;width:288px;text-align:right;font-size:10.8px;color:#6f7c89">brandon.arruda@edupage.com</div>
 <div class="a" style="left:0;top:220px;width:598px;height:27px;background:#468cc3"></div>
 <div class="a" style="left:14px;top:227px;width:12px;height:12px;border-radius:2.5px;border:1px solid #a0a0a0;background:linear-gradient(#f8f8f8,#dedede)"></div>
 <svg class="a" style="left:15px;top:228px" width="10" height="10"><path d="M1.8,5.2 L4,7.6 L8.6,2" fill="none" stroke="#333" stroke-width="2.2"/></svg>
 <div class="t" style="left:56px;top:227px;font-size:12.2px;color:#fff;-webkit-text-stroke:0.25px #fff">Brian</div>
 <div class="t" style="left:197px;top:227px;font-size:12.2px;color:#fff;-webkit-text-stroke:0.25px #fff">Sunchez</div>
 <div class="a" style="left:0;top:247px;width:598px;height:34px;background:#ffffff"></div>
 <div class="a" style="left:14px;top:257px;width:12px;height:12px;border-radius:2.5px;border:1px solid #a0a0a0;background:linear-gradient(#f8f8f8,#dedede)"></div>
 <div class="t" style="left:56px;top:258px;font-size:12.2px;color:#111">Daniel</div>
 <div class="t" style="left:197px;top:258px;font-size:12.2px;color:#111">Dupont</div>
 <div class="t" style="left:338px;top:252px;font-size:12.2px;color:#111">24/04/2018 1:33:41 PM</div>
 <div class="t" style="left:300px;top:266px;width:288px;text-align:right;font-size:10.8px;color:#666">daniel.dupont@edupage.com</div>
 <div class="a" style="left:0;top:281px;width:598px;height:34px;background:#edf5fd"></div>
 <div class="a" style="left:14px;top:291px;width:12px;height:12px;border-radius:2.5px;border:1px solid #a0a0a0;background:linear-gradient(#f8f8f8,#dedede)"></div>
 <div class="t" style="left:56px;top:292px;font-size:12.2px;color:#111">David</div>
 <div class="t" style="left:197px;top:292px;font-size:12.2px;color:#111">Pereira</div>
 <div class="t" style="left:338px;top:286px;font-size:12.2px;color:#111">24/04/2018 1:33:41 PM</div>
 <div class="a" style="left:45px;top:0;width:1px;height:301px;background:#c6c6c6"></div>
 <div class="a" style="left:186px;top:0;width:1px;height:301px;background:#c6c6c6"></div>
 <div class="a" style="left:327px;top:0;width:1px;height:301px;background:#c6c6c6"></div>
 <div class="t" style="left:56px;top:8px;font-size:13px;font-weight:bold;letter-spacing:-0.2px;color:#fff">First name</div>
 <svg class="a" style="left:177px;top:10px" width="9" height="8"><path d="M0.5,7 L4.5,0.5 L8.5,7 Z" fill="#fff"/></svg>
 <div class="t" style="left:197px;top:8px;font-size:13px;font-weight:bold;letter-spacing:-0.2px;color:#fff">Last name</div>
 <div class="t" style="left:338px;top:8px;font-size:13px;font-weight:bold;letter-spacing:-0.2px;color:#fff">Last sent email</div>
 
 <svg class="a" style="left:762px;top:37px" width="8" height="5"><path d="M0,5 L3.5,0 L7,5 Z" fill="#a3a3a3"/></svg>
 <div class="a" style="left:759px;top:47px;width:13px;height:51px;background:#c2c2c2"></div>
 <svg class="a" style="left:762px;top:289px" width="8" height="5"><path d="M0,0 L7,0 L3.5,5 Z" fill="#444"/></svg>
</div>
<!-- buttons -->
<div class="a" style="left:288px;top:581px;width:37px;height:30px;border-radius:2px;border:1px solid #bdbdbd;background:linear-gradient(#fafafa,#e4e4e4)"></div>
<div class="t" style="left:299px;top:590px;font-size:12.2px;font-weight:bold;color:#777">All</div>
<div class="a" style="left:328px;top:581px;width:108px;height:30px;border-radius:2px;border:1px solid #bdbdbd;background:linear-gradient(#fafafa,#e4e4e4)"></div>
<div class="t" style="left:339px;top:590px;font-size:12.2px;font-weight:bold;color:#777">Clear selection</div>
<div class="a" style="left:276px;top:667px;width:800px;height:1px;background:#dcdcdc"></div>
<!-- prev/next -->
<div class="a" style="left:840px;top:672px;width:108px;height:44px;border-radius:2px;border:1px solid #a2a2a2;background:linear-gradient(#fafafa,#e2e2e2)"></div>
<div class="a" style="left:953px;top:672px;width:107px;height:44px;border-radius:2px;border:1px solid #a2a2a2;background:linear-gradient(#fafafa,#e2e2e2)"></div>
<svg class="a" style="left:854px;top:678px" width="32" height="32"><circle cx="16" cy="15.6" r="14.5" fill="#89b3ea" stroke="#5f86bd" stroke-width="1"/><path d="M25,15.6 H14" stroke="#fff" stroke-width="2.6"/><path d="M15,10.8 L7.5,15.6 L15,20.4 Z" fill="#fff"/></svg>
<div class="t" style="left:894px;top:682px;font-size:20px;color:#111">Prev</div>
<div class="t" style="left:965px;top:682px;font-size:20px;color:#111">Next</div>
<svg class="a" style="left:1014px;top:678px" width="32" height="32"><circle cx="16" cy="15.6" r="14.5" fill="#89b3ea" stroke="#5f86bd" stroke-width="1"/><path d="M7,15.6 H18" stroke="#fff" stroke-width="2.6"/><path d="M17,10.8 L24.5,15.6 L17,20.4 Z" fill="#fff"/></svg>

<!-- RED ANNOTATIONS -->
<svg class="a" style="left:0;top:0;z-index:50" width="1352" height="761">
 <defs><filter id="glow" x="-30%" y="-30%" width="160%" height="160%"><feMorphology operator="dilate" radius="2" in="SourceAlpha" result="d"/><feGaussianBlur in="d" stdDeviation="2.5" result="b"/><feFlood flood-color="#fff" flood-opacity="0.9"/><feComposite in2="b" operator="in" result="w"/><feMerge><feMergeNode in="w"/><feMergeNode in="SourceGraphic"/></feMerge></filter></defs>
 <g fill="#c01f27">
  <!-- rect1 -->
  <path d="M397.5,147 Q398,144.5 401,144.5 Q405,144.5 405,147 L404,240 L397.5,240 Z"/>
  <path d="M405,144.8 L476,143.8 L476,147.6 L405,146.4 Z"/>
  <path d="M471.4,144 L476.3,144 L476.5,238 Q474,240.5 471.5,238 Z"/>
  <path d="M397.5,234.2 L476.5,234 L476.5,239.5 Q474,240.6 470,240.6 L397.5,240.7 Z"/>
  <!-- rect2 grid -->
  <path d="M283,294 L888,293.8 L888,299 L283,299 Z"/>
  <path d="M283,294 L286.2,294 L286.2,575 L283,575 Z"/>
  <path d="M882.8,294 L887.4,294 L888.2,572 Q885.6,576.5 883,572 Z"/>
  <path d="M283,571.3 L500,571.6 Q700,572 880,572.3 L880,573 Q700,573.5 500,574 L283,575 Z"/>
  <!-- rect3 next -->
  <path d="M946.4,667 Q947,665 950,665.5 L951,721.3 Q948,721.8 946.6,720 Z"/>
  <path d="M946.6,665.8 L1062,664.8 Q1067.5,664.8 1068,667 L1062,670.6 L951,670.4 Z"/>
  <path d="M1061.8,666 L1068,666 L1068.2,716 Q1065,721 1062,716.5 Z"/>
  <path d="M946.6,717 L960,717.2 Q1010,718.5 1057,719 L1057,719.6 Q1010,720.5 960,721.3 L946.6,721.5 Z"/>
 </g>
 <g filter="url(#glow)">
  <path d="M906.5,407.5 L930,409 M906.5,408 L905.5,422.5 Q912,417.5 920,418.3 Q931,419.5 931,432.5 Q930.5,447.5 916,447.5 Q907.5,447.5 904.5,439" fill="none" stroke="#c01f27" stroke-width="7.5" stroke-linecap="round" stroke-linejoin="round"/>
  <circle cx="943.4" cy="447" r="4.6" fill="#c01f27"/>
 </g>
</svg>
</body></html>
